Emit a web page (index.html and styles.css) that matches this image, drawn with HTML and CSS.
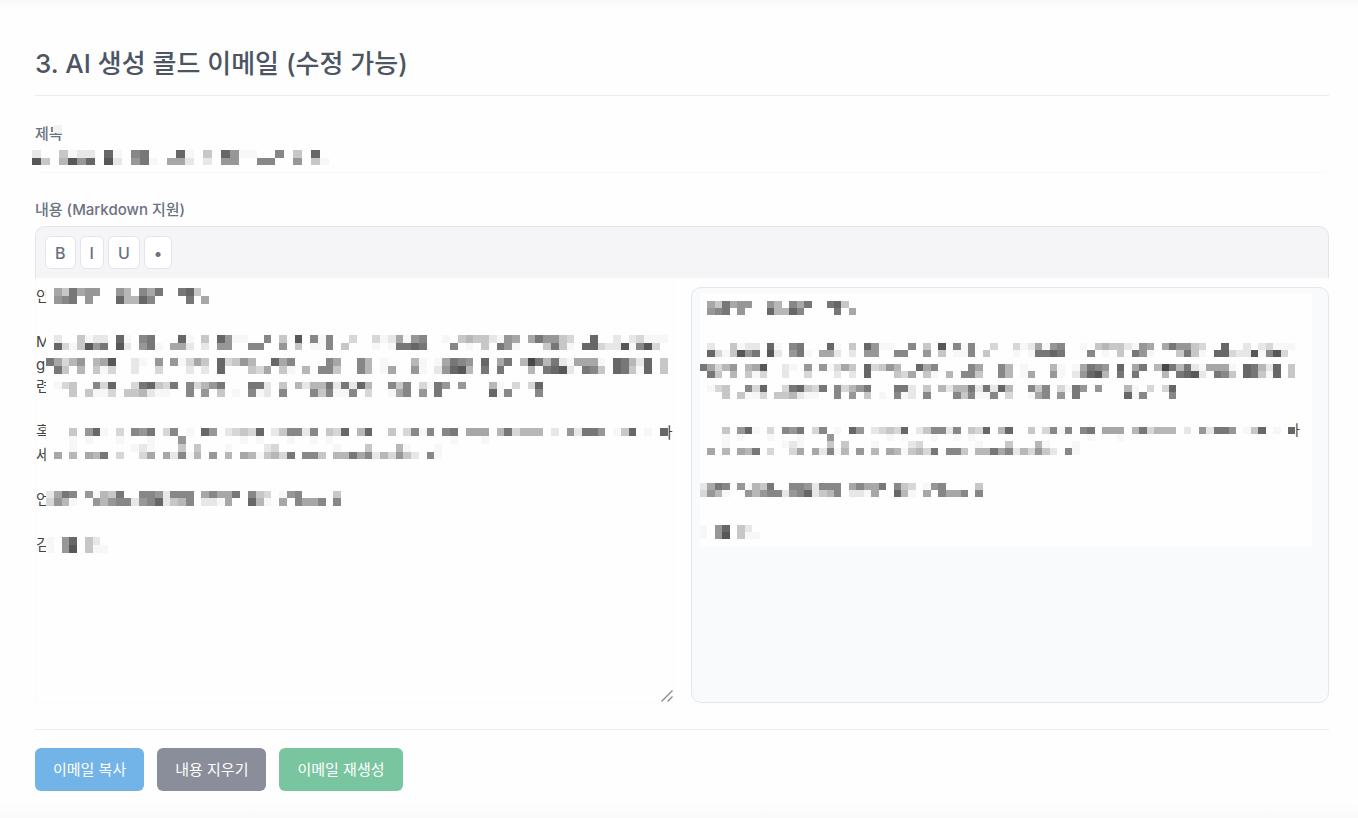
FILE: index.html
```html
<!DOCTYPE html>
<html lang="ko">
<head>
    <meta charset="UTF-8">
    <meta name="viewport" content="width=device-width, initial-scale=1.0">
    <title>AI 콜드 이메일</title>
    <link rel="stylesheet" href="styles.css">
</head>
<body>
    <section class="card">
        <h2>3. AI 생성 콜드 이메일 (수정 가능)</h2>

        <div class="form-group subject-group">
            <label for="subject">제목</label>
            <input type="text" id="subject">
            <div class="label-mask"></div>
            <div class="mosaic subject-mosaic" data-mosaic="subject"></div>
        </div>

        <div class="form-group">
            <label for="content">내용 (Markdown 지원)</label>
            <div class="toolbar">
                <button type="button">B</button>
                <button type="button">I</button>
                <button type="button">U</button>
                <button type="button">•</button>
            </div>
            <div class="editor">
                <div class="editor-pane">
<textarea id="content" spellcheck="false">
안

M
g
련

혹
세

언

김</textarea>
                    <div class="mosaic content-mosaic" data-mosaic="body"><span class="tail">바</span></div>
                    <svg class="resize-handle" viewBox="0 0 14 14" aria-hidden="true">
                        <path d="M1.5 12.5l11-11M7.5 12.5l5-5" fill="none" stroke="#8a8a8a" stroke-width="1.3"/>
                    </svg>
                </div>
                <div class="preview">
                    <div class="preview-text">
                        <div class="mosaic preview-mosaic" data-mosaic="body"><span class="tail">바</span></div>
                    </div>
                </div>
            </div>
        </div>

        <div class="actions">
            <button type="button" class="btn btn-copy">이메일 복사</button>
            <button type="button" class="btn btn-clear">내용 지우기</button>
            <button type="button" class="btn btn-regenerate">이메일 재생성</button>
        </div>
    </section>

    <script src="script.js"></script>
</body>
</html>
```
FILE: styles.css
```css
* {
    box-sizing: border-box;
}
body {
    margin: 0;
    background-color: #fefefe;
    font-family: Inter, "Noto Sans CJK KR", sans-serif;
    color: #4b5563;
}
.card {
    min-height: 100vh;
    padding: 44px 29px 27px 35px;
    background-image: linear-gradient(#f9f9f9, #fefefe 10px, #fefefe calc(100% - 16px), #fafafa);
}
h2 {
    margin: 0 0 28px;
    padding-bottom: 11px;
    border-bottom: 1px solid #ebecee;
    font-size: 26px;
    font-weight: 500;
    line-height: 40px;
}
.form-group {
    position: relative;
}
label {
    display: block;
    font-size: 15px;
    font-weight: 500;
    line-height: 20px;
    color: #6b7280;
}
.subject-group {
    margin-bottom: 27px;
}
input[type="text"] {
    display: block;
    width: 100%;
    height: 29px;
    padding: 0 10px;
    border: 1px solid transparent;
    border-bottom-color: #f8f8f8;
    border-radius: 8px;
    background: transparent;
    font: inherit;
}
.toolbar {
    display: flex;
    gap: 4px;
    margin-top: 6px;
    padding: 9px;
    border: 1px solid #e5e6eb;
    border-bottom: none;
    border-radius: 10px 10px 0 0;
    background-color: #f5f5f8;
}
.toolbar button {
    height: 33px;
    padding: 0 9px;
    border: 1px solid #e5e6eb;
    border-radius: 6px;
    background-color: #fff;
    color: #6b7280;
    font-family: inherit;
    font-size: 16px;
    font-weight: 500;
    cursor: pointer;
}
.editor {
    display: grid;
    grid-template-columns: 1fr 1fr;
    gap: 17px;
}
.editor-pane {
    position: relative;
}
textarea {
    display: block;
    width: 100%;
    height: 425px;
    padding: 8px 0;
    border: 1px solid #fafafa;
    border-top: none;
    background: transparent;
    color: #444;
    font-family: inherit;
    font-size: 15px;
    line-height: 1.5;
    resize: vertical;
}
textarea::-webkit-resizer {
    background: transparent;
}
.resize-handle {
    position: absolute;
    right: 0;
    bottom: 0;
    width: 14px;
    height: 14px;
    pointer-events: none;
}
.preview {
    height: 416px;
    margin-top: 9px;
    padding: 5px 16px 0 8px;
    border: 1px solid #e4e7eb;
    border-radius: 10px;
    background-color: #f9fafc;
}
.preview-text {
    padding: 8px 17px 8px 0;
    background-color: #fefefe;
}

/* pixelated text */
.mosaic svg {
    position: relative;
    display: block;
    width: 100%;
    height: 100%;
}
.label-mask {
    position: absolute;
    top: 1px;
    left: 18px;
    width: 9px;
    height: 8px;
    background-color: #f2f2f3;
}
.subject-mosaic {
    position: absolute;
    top: 26px;
    left: -3px;
    width: 297px;
    height: 15px;
    pointer-events: none;
}
.content-mosaic {
    position: absolute;
    top: 10px;
    left: 11px;
    right: 6px;
    height: 265px;
    pointer-events: none;
}
.preview-mosaic {
    position: relative;
    height: 238px;
}
.tail {
    position: absolute;
    top: 51%;
    right: -5px;
    color: #444;
    font-size: 15px;
    line-height: 20px;
}
.preview-mosaic .tail {
    top: 50%;
    font-size: 14px;
}

.actions {
    display: flex;
    gap: 13px;
    margin-top: 26px;
    padding-top: 18px;
    border-top: 1px solid #ebecee;
}
.btn {
    height: 43px;
    padding: 0 18px 2px;
    border: none;
    border-radius: 6px;
    color: #fff;
    font-family: inherit;
    font-size: 15px;
    cursor: pointer;
}
.btn-copy {
    background-color: #72b3e8;
}
.btn-clear {
    background-color: #8a8d9a;
}
.btn-regenerate {
    background-color: #79c59f;
}
```
FILE: script.js
```js
// one hex digit per cell (0 = black), "." = empty cell, keyed by grid row
var mosaics = {
    subject: {
        cols: 33,
        rows: 2,
        cells: {
            0: "e..cfee.6f.87...6f.c.69ff..8.c.6",
            1: "5c.b596.5e.97f.aae.e.99..88..9.cf"
        }
    },
    body: {
        cols: 80,
        rows: 34,
        cells: {
            0: ".ac7a99..9b.8a7..76c",
            1: ".987.9...6bb68....7.a",
            6: ".e..cfee.6f.87...6f.c.69ff..8.c.5.8f8..d..dfeaf98..f.cbccef9a.a799cd..6..e.edfff",
            7: ".6dfc597.5e.97f.aae.e.99..88..9.c.ff8.c...f.f7767...8.f.c.79f...c7cf.66dee5f85d.",
            9: "7adb9.ba5..ef.9.9fdac.6dc9b..6a8....8a..8b.f...bf.fa789.6.a7.b47b7efaaaf.67be6.c",
            10: ".7c.b.cfd..e..d...e.e.6...cda.cf.b.88c..8b.fa..9f.e965b.7.7...b.765e.78c.67cf6.c",
            12: ".fdc..8d6..d76cd7.8db97...77e.c.bebb7e7e6b..8c8.df79.9...bf.d.d6",
            13: "...c.cffd.ccbeff..8.9.c.f.8fe.8...8c8ff8.d..fa8.9.7......6f8...8",
            18: "...c.96f.d.897.d8.f.69.edcd6.ec88e8.cd6.b6..c.d8f8.87.aaa.b7dbbb.e.9e779.fc6.f.6",
            19: "...f.f...f...f...9.......f.f...f..f.f...............f...f...",
            20: "...f.......fef...c.c...f....ed.......f...c...bf...f",
            21: ".a.b.ab7.d..da.ae8fb.9.b.abfcbd7.88c.bb7a8ebd9ce.8f",
            26: "ea78.9fbc7..889e888.a8aa7.8cd.f98....c",
            27: "d9bf..9b988e986ecb8.eefa..6bf.a.8aa8.8",
            32: "f.96.ce",
            33: "f.95.cff"
        }
    }
};

function drawMosaic(box) {
    var data = mosaics[box.dataset.mosaic];
    var rects = '<rect width="' + data.cols + '" height="' + data.rows + '" fill="#fefefe"/>';
    for (var row in data.cells) {
        data.cells[row].split("").forEach(function(cell, col) {
            if (cell === ".") return;
            var v = parseInt(cell, 16) * 16 + 7;
            rects += '<rect x="' + col + '" y="' + row + '" width="1" height="1" fill="rgb(' + v + ',' + v + ',' + v + ')"/>';
        });
    }
    box.insertAdjacentHTML("beforeend",
        '<svg viewBox="0 0 ' + data.cols + ' ' + data.rows + '" preserveAspectRatio="none" shape-rendering="crispEdges" aria-hidden="true">' + rects + '</svg>');
}

document.querySelectorAll("[data-mosaic]").forEach(drawMosaic);
```
